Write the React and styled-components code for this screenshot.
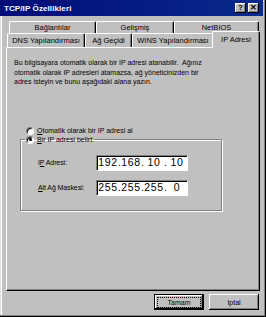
import React from 'react';
import styled, {createGlobalStyle} from 'styled-components';

const Global = createGlobalStyle`
  * { box-sizing: border-box; }
  body {
    margin: 0;
    background: #c0c0c0;
    font-family: "Liberation Sans", Arial, sans-serif;
  }
`;

const Window = styled.div`
  width: 266px;
  height: 317px;
  background: #c0c0c0;
  padding-right: 3px;
  box-shadow: inset -1px -1px 0 #000, inset -2px -2px 0 #808080,
    inset 1px 1px 0 #dfdfdf, inset 2px 2px 0 #fff;
  display: flex;
  flex-direction: column;
  color: #000;
`;

const TitleBar = styled.div`
  height: 16px;
  background: linear-gradient(90deg, #000c78, #0a2a8c);
  display: flex;
  align-items: center;
  padding: 0 4px 0 4px;
`;

const Title = styled.div`
  flex: 1;
  color: #fff;
  font-weight: bold;
  font-size: 8px;
  letter-spacing: 0.1px;
`;

const TitleButton = styled.div`
  width: 11px;
  height: 10px;
  margin-left: 2px;
  background: #c0c0c0;
  box-shadow: inset -1px -1px 0 #000, inset 1px 1px 0 #fff,
    inset -2px -2px 0 #808080;
  display: flex;
  align-items: center;
  justify-content: center;
  font-size: 8px;
  font-weight: bold;
  line-height: 1;
`;

const Body = styled.div`
  flex: 1;
  display: flex;
  flex-direction: column;
  padding: 5px 0 0 6px;
`;

const TabRow = styled.div`
  display: flex;
  height: ${p => p.$h}px;
  padding-left: ${p => p.$indent}px;
  align-items: flex-end;
`;

const Tab = styled.div`
  width: ${p => p.$w}px;
  height: 100%;
  font-size: 7.5px;
  display: flex;
  align-items: center;
  justify-content: center;
  border-top: 1px solid #fff;
  border-left: 1px solid #fff;
  border-right: 1px solid #000;
  box-shadow: inset -1px 0 0 #808080;
  border-radius: 2px 2px 0 0;
  background: #c0c0c0;
  white-space: nowrap;
`;

const ActiveTab = styled(Tab)`
  height: 17px;
  margin: 0 -1px -1px -2px;
  position: relative;
  z-index: 1;
  padding-bottom: 1px;
`;

const Panel = styled.div`
  width: 254px;
  height: 244px;
  border-top: 1px solid #fff;
  border-left: 1px solid #fff;
  border-right: 1px solid #000;
  border-bottom: 1px solid #000;
  box-shadow: inset -1px -1px 0 #808080;
  padding: 10px 0 0 7px;
  font-size: 7px;
`;

const Para = styled.p`
  margin: 0;
  line-height: 9.5px;
`;

const RadioRow = styled.label`
  display: flex;
  align-items: center;
  gap: 3px;
  margin: ${p => p.$m || 0};
  font-size: 7px;
`;

const Radio = styled.span`
  width: 8px;
  height: 8px;
  border-radius: 50%;
  background: #fff;
  border: 1px solid;
  border-color: #808080 #fff #fff #808080;
  box-shadow: inset 1px 1px 0 #000;
  display: flex;
  align-items: center;
  justify-content: center;
  &::after {
    content: '';
    width: 3px;
    height: 3px;
    border-radius: 50%;
    background: ${p => (p.$on ? '#000' : 'transparent')};
  }
`;

const Group = styled.fieldset`
  margin: 1px 0 0 6px;
  width: 202px;
  height: 75px;
  padding: 0;
  border: 1px solid #808080;
  box-shadow: inset 1px 1px 0 #fff, 1px 1px 0 #fff;
`;

const Legend = styled.legend`
  padding: 0 1px 0 1px;
  margin-left: 4px;
`;

const Fields = styled.div`
  display: flex;
  flex-direction: column;
  gap: 9px;
  padding: 11px 0 0 17px;
`;

const FieldRow = styled.div`
  display: flex;
  align-items: center;
`;

const FieldLabel = styled.span`
  width: 58px;
  font-size: 7px;
  letter-spacing: -0.1px;
`;

const IpBox = styled.div`
  width: 92px;
  height: 16px;
  background: #fff;
  border: 1px solid;
  border-color: #808080 #fff #fff #808080;
  box-shadow: inset 1px 1px 0 #000;
  display: flex;
  align-items: center;
  padding-left: 1px;
  font-size: 10.5px;
  line-height: 1;
`;

const Octet = styled.span`
  width: 20px;
  text-align: center;
  letter-spacing: 0.6px;
`;

const Dot = styled.span`
  width: 3px;
  text-align: center;
`;

const U = styled.span`
  text-decoration: underline;
`;

const Footer = styled.div`
  display: flex;
  justify-content: flex-end;
  gap: 5px;
  padding: 3px 4px 0 0;
`;

const Button = styled.div`
  width: 50px;
  height: 16px;
  font-size: 7px;
  display: flex;
  align-items: center;
  justify-content: center;
  background: #c0c0c0;
  box-shadow: inset -1px -1px 0 #000, inset 1px 1px 0 #fff,
    inset -2px -2px 0 #808080;
`;

const DefaultButton = styled(Button)`
  border: 1px solid #000;
  span {
    outline: 1px dotted #000;
    padding: 1px 10px;
  }
`;

function IpField({parts}) {
  return (
    <IpBox>
      {parts.map((p, i) => (
        <React.Fragment key={i}>
          <Octet>{p}</Octet>
          {i < 3 && <Dot>.</Dot>}
        </React.Fragment>
      ))}
    </IpBox>
  );
}

export default function App() {
  return (
    <Window>
      <Global />
      <TitleBar>
        <Title>TCP/IP Özellikleri</Title>
        <TitleButton>?</TitleButton>
        <TitleButton>✕</TitleButton>
      </TitleBar>
      <Body>
        <TabRow $h={12} $indent={3}>
          <Tab $w={87}>Bağlantılar</Tab>
          <Tab $w={78}>Gelişmiş</Tab>
          <Tab $w={85}>NetBIOS</Tab>
        </TabRow>
        <TabRow $h={14} $indent={1}>
          <Tab $w={78}>DNS Yapılandırması</Tab>
          <Tab $w={47}>Ağ Geçidi</Tab>
          <Tab $w={82}>WINS Yapılandırması</Tab>
          <ActiveTab $w={48}>IP Adresi</ActiveTab>
        </TabRow>
        <Panel>
          <Para>
            Bu bilgisayara otomatik olarak bir IP adresi atanabilir.&nbsp; Ağınız
            <br />
            otomatik olarak IP adresleri atamazsa, ağ yöneticinizden bir
            <br />
            adres isteyin ve bunu aşağıdaki alana yazın.
          </Para>
          <RadioRow $m="40px 0 0 12px">
            <Radio />
            <span>
              <U>O</U>tomatik olarak bir IP adresi al
            </span>
          </RadioRow>
          <Group>
            <Legend>
              <RadioRow>
                <Radio $on />
                <span>
                  <U>B</U>ir IP adresi belirt:
                </span>
              </RadioRow>
            </Legend>
            <Fields>
              <FieldRow>
                <FieldLabel>
                  I<U>P</U> Adresi:
                </FieldLabel>
                <IpField parts={['192', '168', '10', '10']} />
              </FieldRow>
              <FieldRow>
                <FieldLabel>
                  <U>A</U>lt Ağ Maskesi:
                </FieldLabel>
                <IpField parts={['255', '255', '255', '0']} />
              </FieldRow>
            </Fields>
          </Group>
        </Panel>
        <Footer>
          <DefaultButton>
            <span>Tamam</span>
          </DefaultButton>
          <Button>Iptal</Button>
        </Footer>
      </Body>
    </Window>
  );
}
